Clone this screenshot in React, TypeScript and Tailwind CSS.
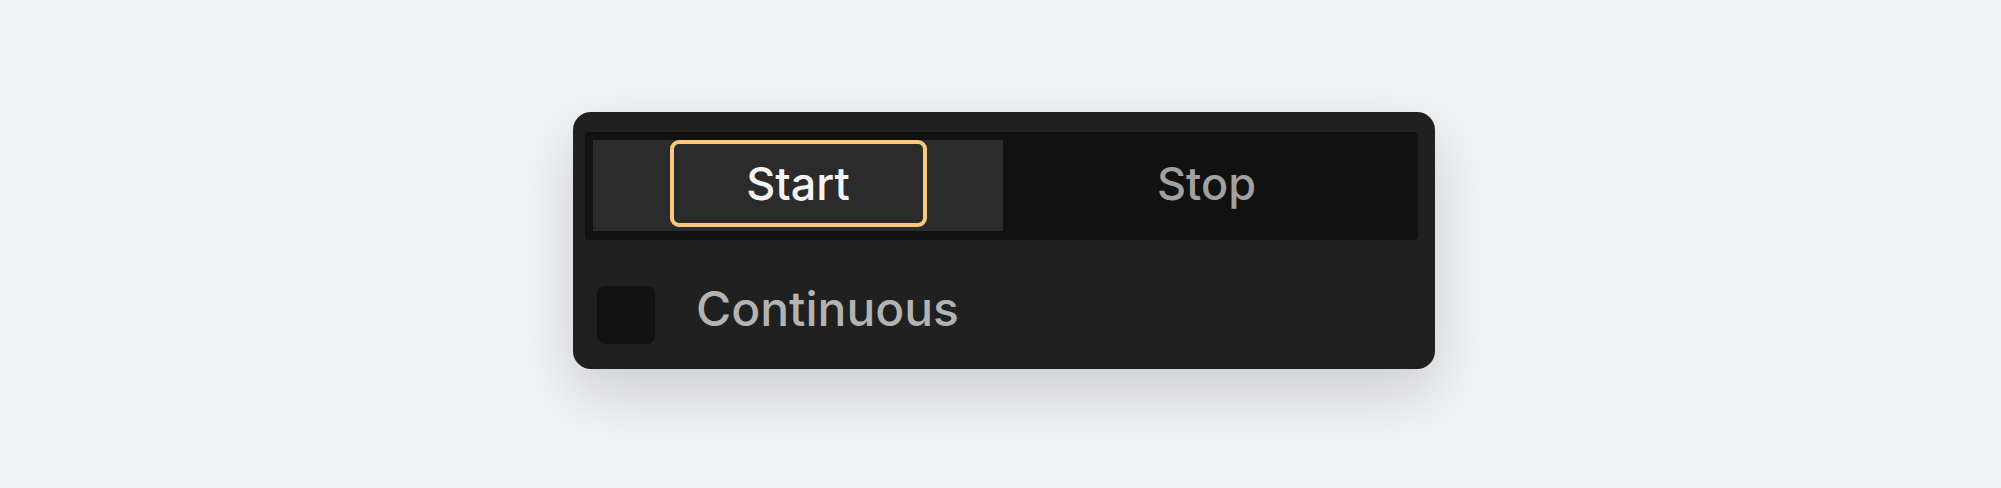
export default function App() {
  return (
    <div className="min-h-[488px] w-full bg-[#f2f3f7] pl-[573px] pt-[112px] font-['Inter','Noto_Sans',sans-serif]">
      <div className="w-[862px] h-[257px] rounded-[18px] bg-[#202020] pl-[12px] pt-[20px] shadow-[0_24px_60px_rgba(0,0,0,0.16)]">
        <div className="flex w-[833px] h-[108px] rounded-[4px] bg-[#111111] p-[8px]">
          <div className="flex w-[410px] h-[91px] justify-center bg-[#2b2b2b]">
            <button
              type="button"
              className="flex w-[257px] h-[87px] items-center justify-center rounded-[9px] border-4 border-[#fcc97a] text-[45px] font-medium text-[#f4f4f4]"
            >
              Start
            </button>
          </div>
          <button type="button" className="flex flex-1 items-center justify-center pb-[4px] text-[45px] font-medium text-[#a1a1a1]">
            Stop
          </button>
        </div>
        <label className="mt-[45px] ml-[12px] flex items-center gap-[41px] leading-none">
          <span className="block size-[58px] rounded-[8px] bg-[#111111]" />
          <span className="mb-[12px] text-[48px] font-medium text-[#b3b3b3]">Continuous</span>
        </label>
      </div>
    </div>
  )
}
